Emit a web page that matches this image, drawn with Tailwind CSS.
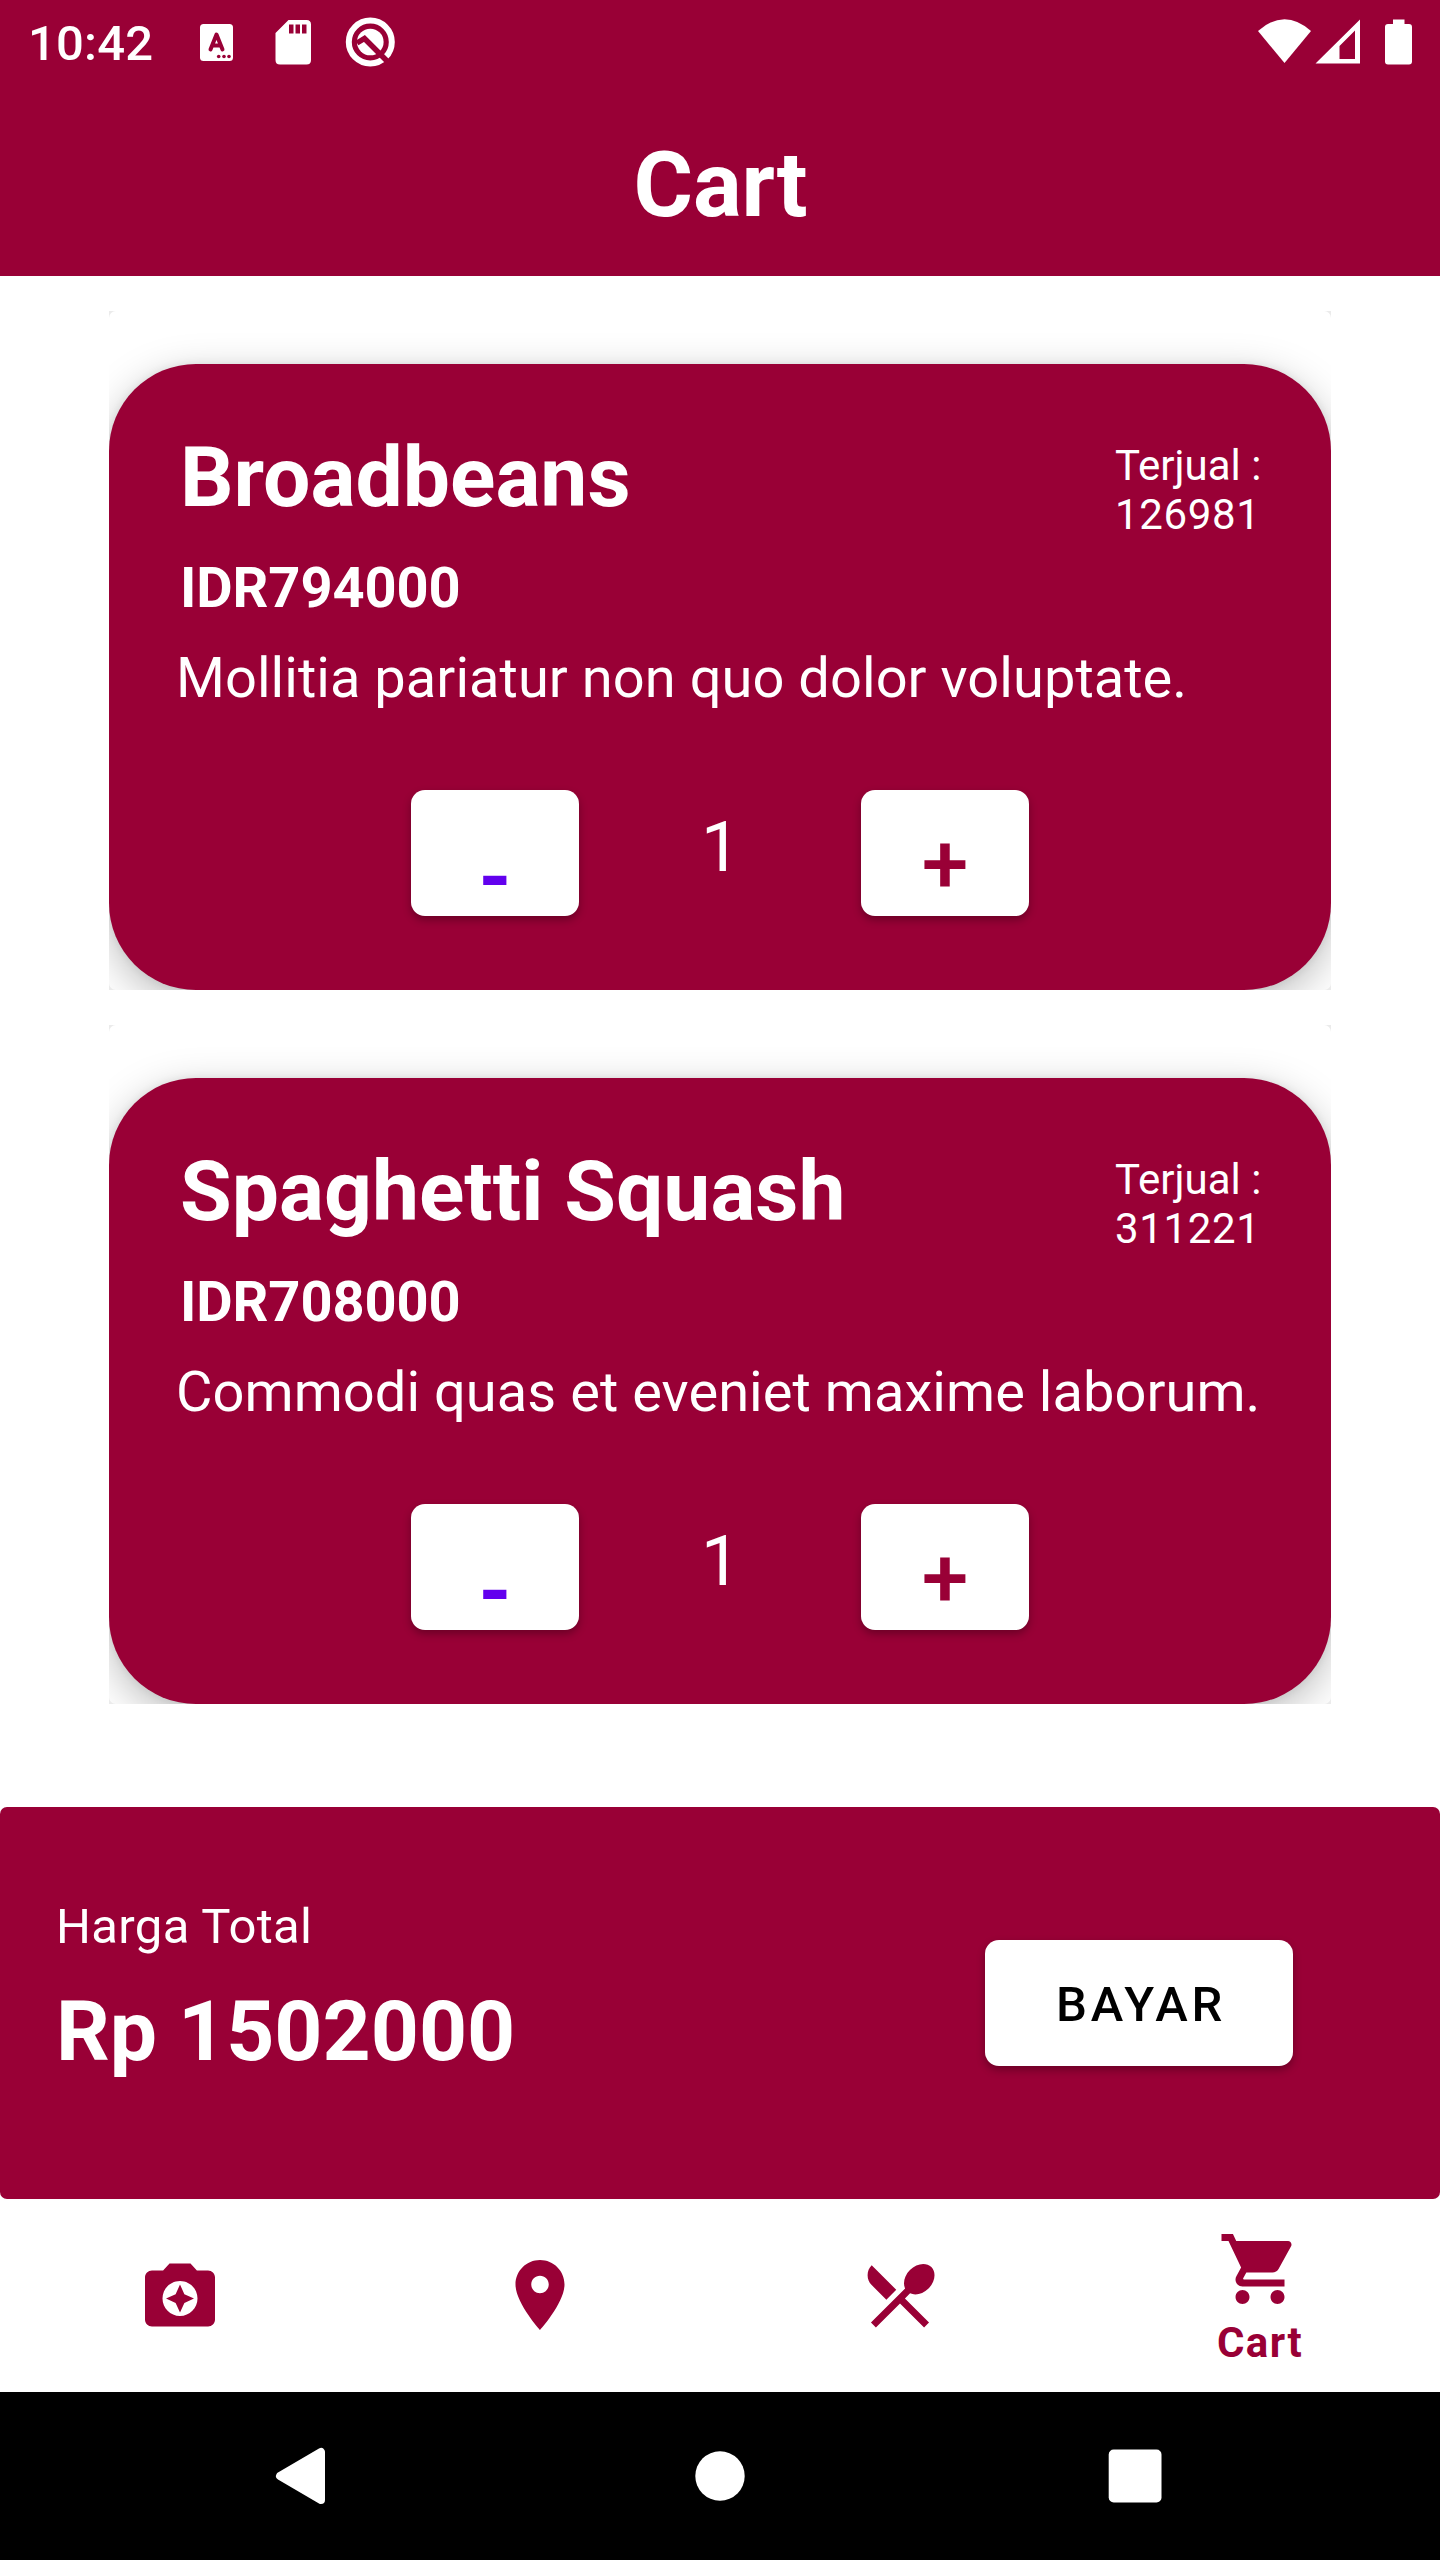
<!DOCTYPE html>
<html lang="id">
<head>
<meta charset="utf-8">
<title>Cart</title>
<script src="https://cdn.jsdelivr.net/npm/@tailwindcss/browser@4"></script>
</head>
<body class="bg-white font-['Roboto',sans-serif]">
<div class="flex h-[2560px] w-[1440px] flex-col overflow-hidden bg-white text-white">
  <header class="h-[276px] bg-[#990036]">
    <div class="flex h-[84px] items-center justify-between">
      <div class="flex items-center">
        <span class="ml-[28px] w-[169px] pt-[3px] text-[49px] leading-[81px] font-medium tracking-[0.2px]">10:42</span>
        <svg class="h-[84px] w-[200px]" viewBox="197 0 200 84" fill="#fff">
          <rect x="200" y="24" width="33" height="37" rx="3.500"/>
          <path d="M210.500 49.500L216.500 34.500L222.500 49.500M212.500 45.500H220.500" fill="none" stroke="#990036" stroke-width="4" stroke-linecap="round" stroke-linejoin="round"/>
          <g fill="#990036"><circle cx="218.700" cy="56.500" r="1.800"/><circle cx="224" cy="56.500" r="1.800"/><circle cx="229" cy="56.500" r="1.800"/></g>
          <path fill-rule="evenodd" d="M288.500 20H306.500Q311 20 311 24.500V60Q311 64.500 306.500 64.500H280Q275.500 64.500 275.500 60V33ZM289 24.500V33.500H293.500V24.500ZM295.500 24.500V33.500H300V24.500ZM302 24.500V33.500H306.500V24.500Z"/>
          <circle cx="370.300" cy="42" r="21.500" fill="none" stroke="#fff" stroke-width="6"/>
          <circle cx="370.300" cy="42" r="13.300"/>
          <path d="M357 43L364.500 38.500L389 63" fill="none" stroke="#990036" stroke-width="5.500"/>
        </svg>
      </div>
      <svg class="h-[84px] w-[190px]" viewBox="1250 0 190 84" fill="#fff">
        <path d="M1258 31Q1284.500 7.500 1311 31L1284.500 63Z"/>
        <path fill-rule="evenodd" d="M1360 19.500V63.500H1315.500ZM1355 30.500L1339.500 46V59H1355Z"/>
        <path d="M1393 19.500H1404.500V24H1409Q1412 24 1412 27V61.500Q1412 64.500 1409 64.500H1388Q1385 64.500 1385 61.500V27Q1385 24 1388 24H1393Z"/>
      </svg>
    </div>
    <h1 class="pt-[41px] pl-px text-center text-[91px] leading-[120px] font-bold tracking-[-0.2px]">Cart</h1>
  </header>

  <main class="flex h-[1531px] flex-col gap-[35px] px-[109px] pt-[35px]">
    <section class="h-[679px] w-[1222px] overflow-hidden bg-[#ebebeb]">
      <div class="h-full overflow-hidden rounded-[7px] bg-white pt-[53px]">
        <article class="flex h-[626px] flex-col rounded-[87px] bg-[#990036] shadow-[0_12px_42px_rgba(0,0,0,0.26),0_0_8px_rgba(0,0,0,0.08)]">
          <div class="flex justify-between pt-[65px] pr-[70px] pl-[71px]">
            <div>
              <h2 class="text-[84px] leading-[98px] font-bold">Broadbeans</h2>
              <p class="mt-[28px] text-[56px] leading-[66px] font-bold tracking-[-0.1px]">IDR794000</p>
            </div>
            <p class="mt-[12px] w-[146px] text-[42px] leading-[49px] whitespace-nowrap">Terjual :<br><span class="tracking-[0.65px]">126981</span></p>
          </div>
          <p class="mt-[24px] pl-[67px] text-[56px] leading-[66px] tracking-[0.045px] whitespace-nowrap">Mollitia pariatur non quo dolor voluptate.</p>
          <div class="mt-[79px] flex gap-[120px] pl-[302px]">
            <button class="flex h-[126px] w-[168px] justify-center rounded-[14px] bg-white pt-[39px] text-[84px] leading-[98px] font-bold text-[#6200ee] shadow-[0_4px_8px_rgba(0,0,0,0.3)]">-</button>
            <span class="w-[42px] pt-[16px] pl-[2px] text-[70px] leading-[82px]">1</span>
            <button class="h-[126px] w-[168px] rounded-[14px] bg-white pt-[23px] text-[84px] leading-[98px] font-medium text-[#990036] shadow-[0_4px_8px_rgba(0,0,0,0.3)]">+</button>
          </div>
        </article>
      </div>
    </section>
    <section class="h-[679px] w-[1222px] overflow-hidden bg-[#ebebeb]">
      <div class="h-full overflow-hidden rounded-[7px] bg-white pt-[53px]">
        <article class="flex h-[626px] flex-col rounded-[87px] bg-[#990036] shadow-[0_12px_42px_rgba(0,0,0,0.26),0_0_8px_rgba(0,0,0,0.08)]">
          <div class="flex justify-between pt-[65px] pr-[70px] pl-[71px]">
            <div>
              <h2 class="text-[84px] leading-[98px] font-bold">Spaghetti Squash</h2>
              <p class="mt-[28px] text-[56px] leading-[66px] font-bold tracking-[-0.1px]">IDR708000</p>
            </div>
            <p class="mt-[12px] w-[146px] text-[42px] leading-[49px] whitespace-nowrap">Terjual :<br><span class="tracking-[0.65px]">311221</span></p>
          </div>
          <p class="mt-[24px] pl-[67px] text-[56px] leading-[66px] tracking-[0.045px] whitespace-nowrap">Commodi quas et eveniet maxime laborum.</p>
          <div class="mt-[79px] flex gap-[120px] pl-[302px]">
            <button class="flex h-[126px] w-[168px] justify-center rounded-[14px] bg-white pt-[39px] text-[84px] leading-[98px] font-bold text-[#6200ee] shadow-[0_4px_8px_rgba(0,0,0,0.3)]">-</button>
            <span class="w-[42px] pt-[16px] pl-[2px] text-[70px] leading-[82px]">1</span>
            <button class="h-[126px] w-[168px] rounded-[14px] bg-white pt-[23px] text-[84px] leading-[98px] font-medium text-[#990036] shadow-[0_4px_8px_rgba(0,0,0,0.3)]">+</button>
          </div>
        </article>
      </div>
    </section>
  </main>

  <section class="flex h-[392px] justify-between rounded-[7px] bg-[#990036] pr-[147px] pl-[56px]">
    <div class="pt-[91px]">
      <p class="text-[49px] leading-[57px] tracking-[0.35px]">Harga Total</p>
      <p class="mt-[28px] text-[84px] leading-[98px] font-bold">Rp 1502000</p>
    </div>
    <button class="mt-[133px] h-[126px] w-[308px] rounded-[14px] bg-white pt-[4px] pl-[4px] text-[49px] font-medium tracking-[3.8px] text-black shadow-[0_4px_8px_rgba(0,0,0,0.3)]">BAYAR</button>
  </section>

  <nav class="grid h-[193px] grid-cols-4 bg-white text-[#990036]">
    <a class="flex justify-center pt-[54px]"><svg class="size-[84px]" viewBox="0 0 24 24" fill="currentColor"><path d="M9 3L7.170 5H4c-1.100 0-2 .9-2 2v12c0 1.100.9 2 2 2h16c1.100 0 2-.9 2-2V7c0-1.100-.9-2-2-2h-3.170L15 3H9zm3 15c-2.760 0-5-2.240-5-5s2.240-5 5-5 5 2.240 5 5-2.240 5-5 5z"/><path d="M12 17l1.250-2.750L16 13l-2.750-1.250L12 9l-1.250 2.750L8 13l2.750 1.250z"/></svg></a>
    <a class="flex justify-center pt-[54px]"><svg class="size-[84px]" viewBox="0 0 24 24" fill="currentColor"><path d="M12 2C8.130 2 5 5.130 5 9c0 5.250 7 13 7 13s7-7.750 7-13c0-3.870-3.130-7-7-7zm0 9.500c-1.380 0-2.500-1.120-2.500-2.500s1.120-2.500 2.500-2.500 2.500 1.120 2.500 2.500-1.120 2.500-2.500 2.500z"/></svg></a>
    <a class="flex justify-center pt-[54px]"><svg class="size-[84px]" viewBox="0 0 24 24" fill="currentColor"><path d="M8.100 13.340l2.830-2.830L3.910 3.500c-1.560 1.560-1.560 4.090 0 5.660l4.190 4.180zm6.780-1.810c1.530.71 3.680.21 5.270-1.380 1.910-1.910 2.280-4.650.81-6.120-1.460-1.460-4.200-1.100-6.120.81-1.590 1.590-2.090 3.740-1.380 5.270L3.700 19.870l1.410 1.410L12 14.410l6.880 6.880 1.410-1.410L13.410 13l1.470-1.470z"/></svg></a>
    <a class="flex flex-col items-center pt-[28px]"><svg class="size-[84px] shrink-0" viewBox="0 0 24 24" fill="currentColor"><path d="M7 18c-1.100 0-1.990.9-1.990 2S5.900 22 7 22s2-.9 2-2-.9-2-2-2zM1 2v2h2l3.600 7.590-1.350 2.450c-.16.280-.25.610-.25.960 0 1.100.9 2 2 2h12v-2H7.420c-.14 0-.25-.11-.25-.25l.03-.12.9-1.630h7.450c.75 0 1.410-.41 1.750-1.030l3.580-6.490c.08-.14.120-.31.120-.48 0-.55-.45-1-1-1H5.210l-.94-2H1zm16 16c-1.100 0-1.990.9-1.990 2s.89 2 1.990 2 2-.9 2-2-.9-2-2-2z"/></svg><span class="mt-[7px] text-[42px] leading-[49px] font-bold tracking-[0.0333em]">Cart</span></a>
  </nav>

  <footer class="h-[168px] bg-black">
    <svg class="h-[168px] w-[1440px]" viewBox="0 2392 1440 168" fill="#fff">
      <path d="M280 2476L321 2452V2500Z" stroke="#fff" stroke-width="8" stroke-linejoin="round"/>
      <circle cx="720" cy="2476" r="24.700"/>
      <rect x="1108.700" y="2449.500" width="52.800" height="53" rx="5"/>
    </svg>
  </footer>
</div>
</body>
</html>
